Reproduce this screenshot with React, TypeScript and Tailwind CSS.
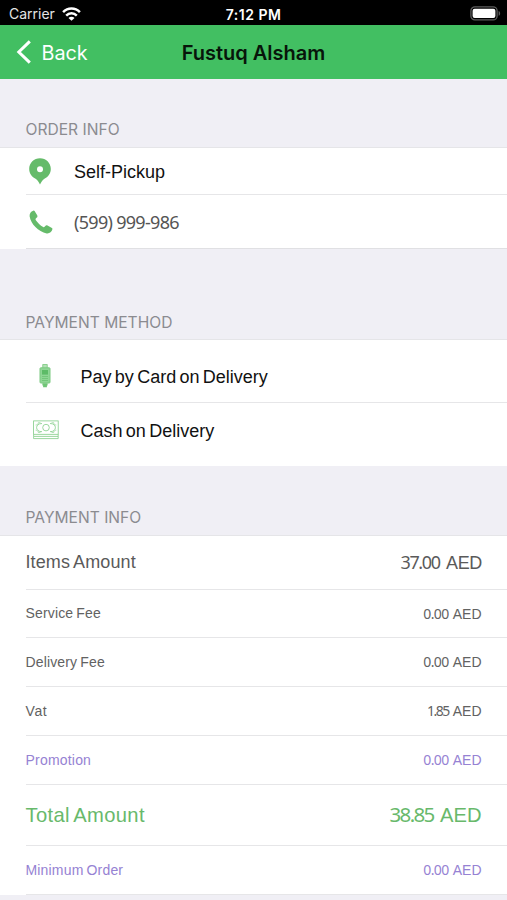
import { ReactNode } from "react";
import clsx from "clsx";

interface FeeRow {
  label: string;
  amount: string;
  size: "sm" | "md" | "lg";
  color: string;
  height: string;
  labelTracking?: string;
  digitTracking?: string;
}

const fees: FeeRow[] = [
  { label: "Items Amount", amount: "37.00", size: "md", color: "text-[#5a5a5a]", height: "h-[54px]", labelTracking: "tracking-[0.1px]" },
  { label: "Service Fee", amount: "0.00", size: "sm", color: "text-[#626262]", height: "h-[48px]", labelTracking: "tracking-[0.15px]" },
  { label: "Delivery Fee", amount: "0.00", size: "sm", color: "text-[#626262]", height: "h-[49px]", labelTracking: "tracking-[0.15px]" },
  { label: "Vat", amount: "1.85", size: "sm", color: "text-[#626262]", height: "h-[49px]", labelTracking: "tracking-[0.6px]", digitTracking: "tracking-[-1.5px]" },
  { label: "Promotion", amount: "0.00", size: "sm", color: "text-[#9682d3]", height: "h-[49px]", labelTracking: "tracking-[0.2px]" },
  { label: "Total Amount", amount: "38.85", size: "lg", color: "text-[#68b96b]", height: "h-[61px]", labelTracking: "tracking-[0.35px]" },
  { label: "Minimum Order", amount: "0.00", size: "sm", color: "text-[#9682d3]", height: "h-[49px]", labelTracking: "tracking-[0.17px]" },
];

const labelSizes = {
  sm: "text-[14px] [word-spacing:-1px]",
  md: "text-[18px] [word-spacing:-1px]",
  lg: "text-[20.2px] [word-spacing:-1.5px]",
};

const digitSizes = {
  sm: "text-[14px] mr-[4px]",
  md: "text-[18px] mr-[6.5px]",
  lg: "text-[20.5px] mr-[6.5px]",
};

const digitTrackings = {
  sm: "tracking-[-0.6px]",
  md: "tracking-[-1.4px]",
  lg: "tracking-[-1.7px]",
};

const currencyTrackings = {
  sm: "tracking-normal",
  md: "tracking-[-0.4px] -mr-[0.4px]",
  lg: "tracking-normal",
};

const WifiIcon = () => (
  <svg width="19" height="14" viewBox="0 0 19 14" fill="none" stroke="#fff" strokeWidth="2.5">
    <path d="M1.1 5.2C5.8 0.4 13.2 0.4 17.9 5.2" />
    <path d="M4.2 8.6C7.2 5.6 11.8 5.6 14.8 8.6" />
    <path d="M9.5 13.8L6.5 10.9C8.1 9.3 10.9 9.3 12.5 10.9Z" fill="#fff" stroke="none" />
  </svg>
);

const BatteryIcon = () => (
  <svg width="31" height="15" viewBox="0 0 31 15" fill="none">
    <rect x="0.9" y="0.9" width="26.2" height="13" rx="4" stroke="#5d5d5d" strokeWidth="1.3" />
    <rect x="2.6" y="2.8" width="22.8" height="9.3" rx="2" fill="#fff" />
    <path d="M28.6 5C30.6 5.6 30.6 9.2 28.6 9.8Z" fill="#5d5d5d" />
  </svg>
);

const PinIcon = () => (
  <svg width="22" height="27" viewBox="0 0 22 27">
    <path
      d="M11 0.3C5 0.3 0.2 5 0.2 11C0.2 15.8 3.2 18.9 6.6 20.8C8.9 22.1 9.9 24.6 11 26.6C12.1 24.6 13.1 22.1 15.4 20.8C18.8 18.9 21.8 15.8 21.8 11C21.8 5 17 0.3 11 0.3Z"
      fill="#65bb6a"
    />
    <circle cx="11" cy="11.2" r="3" fill="#fff" />
  </svg>
);

const PhoneIcon = () => (
  <svg width="24" height="24" viewBox="0 0 24 24">
    <path
      d="M4.3 0.7C4.8 0.4 5.3 0.6 5.6 1.1L8.2 5.2C8.7 6.1 8.5 7 7.8 7.6L6.8 8.5C6.4 8.9 6.4 9.4 6.7 9.9C8.7 12.9 11.2 15.2 14.2 17C14.7 17.3 15.2 17.2 15.6 16.7L16.3 15.9C16.9 15.2 17.7 15.1 18.5 15.5L22.9 17.9C23.4 18.2 23.6 18.7 23.4 19.3C22.7 21.9 20.4 23.8 17.7 23.4C9.2 21.4 1.9 14.1 0.6 6.2C0.4 3.6 1.8 1.6 4.3 0.7Z"
      fill="#65bb6a"
    />
  </svg>
);

const CardMachineIcon = () => (
  <svg width="12" height="24" viewBox="0 0 12 24">
    <rect x="3.8" y="0.6" width="4.4" height="4" fill="#b4e2b7" stroke="#77c77b" strokeWidth="0.8" />
    <rect x="1" y="3.8" width="10" height="15.2" rx="0.8" fill="#8fd695" stroke="#7bc980" />
    <rect x="3" y="6" width="6" height="4.6" fill="#5dbb67" />
    <path d="M3 12.5H9M3 14.5H9M3 16.5H9" stroke="#6cc373" strokeWidth="0.8" />
    <path d="M3.4 19.3H8.6V21.4H7.9V23.3H4.1V21.4H3.4Z" fill="#70c577" />
  </svg>
);

const CashIcon = () => (
  <svg width="26" height="20" viewBox="0 0 26 20" fill="none" stroke="#82cd87" strokeWidth="0.8">
    <rect x="0.6" y="0.9" width="24.6" height="13.4" />
    <path d="M2.6 5C4.2 5 5.3 4.1 5.3 2.7H7.5M23.3 5C21.8 5 20.7 4.1 20.7 2.7H18.5M2.6 10.2C4.2 10.2 5.3 11.2 5.3 12.5H7.5M23.3 10.2C21.8 10.2 20.7 11.2 20.7 12.5H18.5" strokeWidth="0.6" />
    <circle cx="13" cy="7.6" r="3.3" />
    <path d="M9 3.5C1.8 3.3 1.8 11.9 9 11.7M17 3.5C24.2 3.3 24.2 11.9 17 11.7" />
    <path d="M0.6 14.3V16.4H25.2V14.3M0.6 16.4V18.6H25.2V16.4" />
  </svg>
);

const SectionTitle = ({ children, className }: { children: ReactNode; className: string }) => (
  <div className={clsx("flex items-end bg-[#f0eff5] border-b border-[#e5e5e8] pl-[25.5px]", className)}>
    <h2 className="font-['Inter'] text-[15.6px] leading-5 text-[#8b8b90]">{children}</h2>
  </div>
);

const StatusBar = () => (
  <div className="h-[25px] bg-black text-white font-['Inter'] text-[14px] grid grid-cols-3 items-center">
    <div className="flex items-center pl-[9px] pt-[2px]">
      <span className="w-[53px] text-[#e4e4e4]">Carrier</span>
      <WifiIcon />
    </div>
    <span className="text-center font-semibold text-[14px] tracking-[0.5px] pt-[3px]">7:12 PM</span>
    <div className="flex justify-end pr-[6px] pt-[1px]">
      <BatteryIcon />
    </div>
  </div>
);

const App = () => {
  return (
    <div className="w-full h-[900px] overflow-hidden bg-[#f0eff5] font-['Liberation_Sans',sans-serif]">
      <StatusBar />

      {/* Navigation bar */}
      <div className="h-[54px] bg-[#42bf62] grid grid-cols-[150px_1fr_150px] items-center font-['Inter']">
        <button className="flex items-center pl-[16px] text-white">
          <svg width="16" height="26" viewBox="0 0 16 26" fill="none" stroke="#fff" strokeWidth="3">
            <path d="M13.8 2.3L2.8 13L13.8 23.7" />
          </svg>
          <span className="pl-[9.5px] pt-[1px] text-[19.8px] leading-6">Back</span>
        </button>
        <h1 className="pt-[1px] text-center text-[20px] font-semibold text-[#07150a] whitespace-nowrap">Fustuq Alsham</h1>
      </div>

      <SectionTitle className="h-[69px] pb-[7px]">ORDER INFO</SectionTitle>
      <div className="bg-white pl-[26px]">
        <div className="h-[47px] flex items-center border-b border-[#e6e6e8] pl-[3px]">
          <PinIcon />
          <span className="pl-[23px] pt-[2px] text-[18px] text-[#111]">Self-Pickup</span>
        </div>
        <div className="h-[54px] flex items-center border-b border-[#e0e0e3] pl-[3px]">
          <PhoneIcon />
          <span className="pl-[21px] pt-[2px] font-['Noto_Sans'] text-[18px] tracking-[-0.7px] text-[#555]">(599) 999-986</span>
        </div>
      </div>

      <SectionTitle className="h-[91px] pb-[6px]">PAYMENT METHOD</SectionTitle>
      <div className="bg-white pl-[26px] text-[18px] text-[#111]">
        <div className="h-[63px] flex items-center border-b border-[#e6e6e8] pt-[10px]">
          <div className="w-[54.5px] pl-[13px]">
            <CardMachineIcon />
          </div>
          <span className="[word-spacing:-1.7px] pt-[2px]">Pay by Card on Delivery</span>
        </div>
        <div className="h-[63px] flex items-center pb-[9px]">
          <div className="w-[54.5px] pl-[7px]">
            <CashIcon />
          </div>
          <span className="[word-spacing:-1.7px] pt-[2px]">Cash on Delivery</span>
        </div>
      </div>

      <SectionTitle className="h-[70px] pb-[7px]">PAYMENT INFO</SectionTitle>
      <div className="bg-white pl-[25.5px]">
        {fees.map((fee) => (
          <div
            key={fee.label}
            className={clsx("flex items-center justify-between border-b border-[#e6e6e8] pr-[25.5px]", fee.height, fee.color)}
          >
            <span className={clsx(labelSizes[fee.size], fee.labelTracking)}>{fee.label}</span>
            <span className={clsx("flex items-baseline", labelSizes[fee.size])}>
              <span className={clsx("font-['Noto_Sans']", digitSizes[fee.size], fee.digitTracking || digitTrackings[fee.size])}>
                {fee.amount}
              </span>
              <span className={currencyTrackings[fee.size]}>AED</span>
            </span>
          </div>
        ))}
      </div>
    </div>
  );
};

export default App;
